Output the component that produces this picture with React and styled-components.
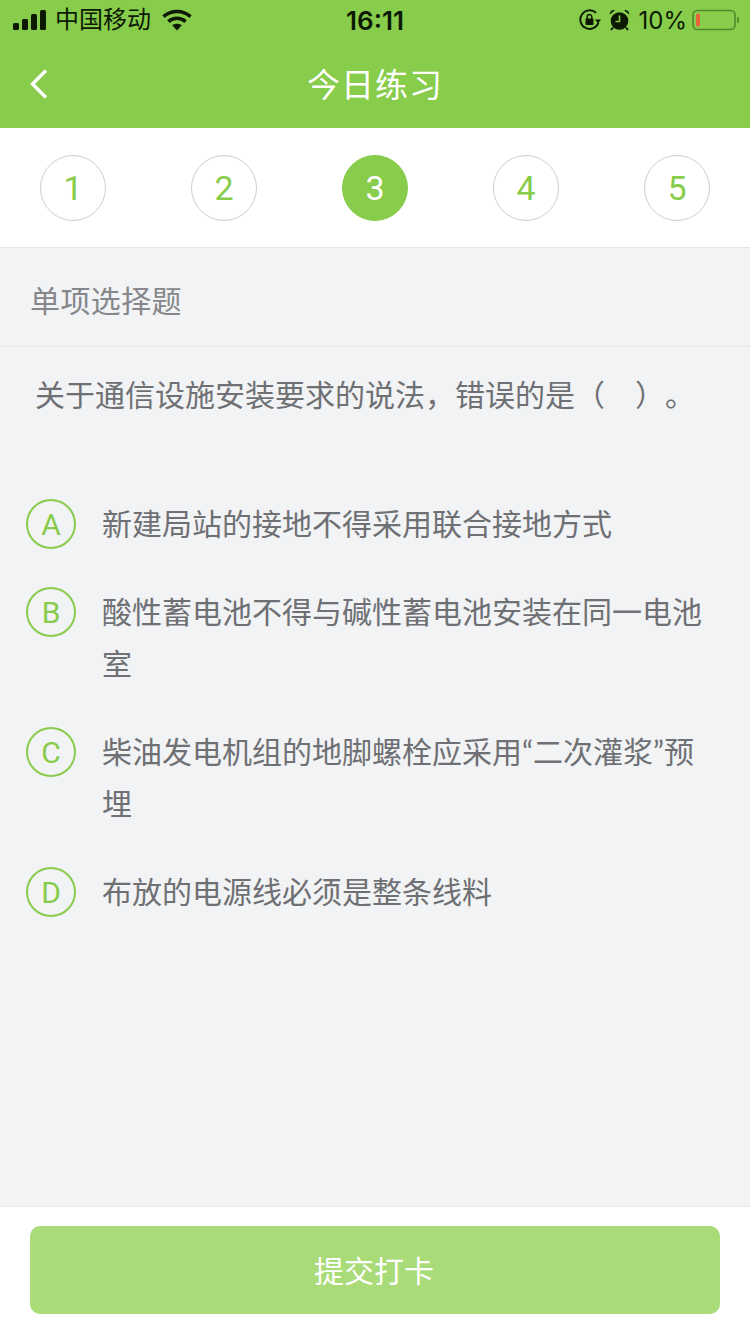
import React from 'react';
import styled, { createGlobalStyle } from 'styled-components';

const GlobalStyle = createGlobalStyle`
  html, body { margin: 0; padding: 0; }
  body {
    background: #f2f3f5;
    font-family: "Liberation Sans", "Noto Sans CJK SC", sans-serif;
  }
`;

const Page = styled.div`
  width: 750px;
  height: 1334px;
  display: flex;
  flex-direction: column;
  overflow: hidden;
`;

const Header = styled.header`
  background: #88cc4b;
`;

const StatusBar = styled.div`
  height: 40px;
  display: grid;
  grid-template-columns: 1fr auto 1fr;
  align-items: center;
  color: #0c1a04;
`;

const StatusLeft = styled.div`
  display: flex;
  align-items: center;
  padding-left: 13px;
`;

const Carrier = styled.span`
  font-size: 24px;
  margin-left: 9px;
  margin-right: 11px;
  line-height: 40px;
`;

const Time = styled.span`
  font-family: "Inter", "Liberation Sans", sans-serif;
  font-size: 26px;
  font-weight: 600;
`;

const StatusRight = styled.div`
  display: flex;
  align-items: center;
  justify-content: flex-end;
  gap: 8px;
  padding-right: 10px;
`;

const Percent = styled.span`
  font-family: "Inter", "Liberation Sans", sans-serif;
  font-size: 24px;
  margin: 0 -3px 0 1px;
`;

const NavBar = styled.div`
  height: 88px;
  box-sizing: border-box;
  display: grid;
  grid-template-columns: 1fr auto 1fr;
  align-items: center;
  padding: 0 30px;
`;

const Title = styled.h1`
  margin: 0 0 3px;
  font-size: 33px;
  font-weight: 400;
  letter-spacing: 1px;
  color: #fff;
`;

const Steps = styled.nav`
  height: 120px;
  box-sizing: border-box;
  background: #fff;
  border-bottom: 1px solid #e4e5e7;
  padding: 27px 40px 0;
  display: flex;
  justify-content: space-between;
  align-items: flex-start;
`;

const Step = styled.div`
  width: 66px;
  height: 66px;
  box-sizing: border-box;
  border-radius: 50%;
  display: flex;
  align-items: center;
  justify-content: center;
  font-family: "Roboto", "Liberation Sans", sans-serif;
  font-size: 34px;
  font-weight: 400;
  border: 1px solid ${p => (p.$active ? '#88cc4b' : '#cfcfcf')};
  background: ${p => (p.$active ? '#88cc4b' : '#fff')};
  color: ${p => (p.$active ? '#fff' : '#88cc4b')};
`;

const Body = styled.main`
  flex: 1;
  background: #f2f3f5;
`;

const SectionLabel = styled.div`
  height: 99px;
  box-sizing: border-box;
  padding: 4px 0 0 30px;
  display: flex;
  align-items: center;
  font-size: 30px;
  letter-spacing: 0.4px;
  color: #85878a;
  border-bottom: 1px solid #e6e7e9;
`;

const Question = styled.p`
  margin: 0;
  padding: 23px 0 0 35px;
  height: 150px;
  box-sizing: border-box;
  font-size: 30px;
  line-height: 52px;
  color: #6e7073;
  white-space: nowrap;
  text-spacing-trim: space-all;
`;

const Options = styled.ul`
  list-style: none;
  margin: 0;
  padding: 0 30px 0 26px;
  display: flex;
  flex-direction: column;
  gap: 36px;
`;

const Option = styled.li`
  display: flex;
  align-items: flex-start;
  gap: 26px;
`;

const Letter = styled.span`
  flex: none;
  width: 50px;
  height: 50px;
  margin-top: 2px;
  box-sizing: border-box;
  border: 2px solid #88cc4b;
  border-radius: 50%;
  display: flex;
  align-items: center;
  justify-content: center;
  font-family: "Roboto", "Liberation Sans", sans-serif;
  font-size: 30px;
  font-weight: 400;
  color: #88cc4b;
`;

const OptionText = styled.span`
  font-family: "Lato", "Noto Sans CJK SC", sans-serif;
  font-size: 30px;
  line-height: 52px;
  color: #6e7073;
`;

const Footer = styled.footer`
  height: 128px;
  box-sizing: border-box;
  background: #fff;
  border-top: 1px solid #e8e9eb;
  padding: 19px 30px 0;
`;

const Submit = styled.button`
  display: block;
  width: 100%;
  height: 88px;
  border: 0;
  border-radius: 10px;
  background: #a9dc79;
  color: #fff;
  font-family: inherit;
  font-size: 30px;
  padding: 0 2px 3px 0;
`;

const SignalIcon = () => (
  <svg width="33" height="20" viewBox="0 0 33 20" fill="currentColor">
    <rect x="0" y="13" width="6" height="7" rx="1.5" />
    <rect x="9" y="9" width="6" height="11" rx="1.5" />
    <rect x="18" y="4" width="6" height="16" rx="1.5" />
    <rect x="27" y="0" width="6" height="20" rx="1.5" />
  </svg>
);

const WifiIcon = () => (
  <svg width="30" height="22" viewBox="0 0 30 22" fill="none" stroke="currentColor" strokeWidth="3.6">
    <path d="M1.5 7.6C9 .8 21 .8 28.5 7.6" />
    <path d="M6.4 12.6c5-4.4 12.2-4.4 17.2 0" />
    <path d="M15 21.5l-4.8-5.2c2.8-2 6.8-2 9.6 0z" fill="currentColor" stroke="none" />
  </svg>
);

const LockRotationIcon = () => (
  <svg width="22" height="22" viewBox="0 0 22 22" fill="none" stroke="currentColor">
    <path d="M19.5 13.5A9.3 9.3 0 1 1 17 3.8" strokeWidth="1.9" />
    <path d="M16 10.5h6l-3 3.8z" fill="currentColor" stroke="none" />
    <rect x="6.5" y="9.5" width="8" height="6.5" rx="1" fill="currentColor" stroke="none" />
    <path d="M8.2 10V7.8a2.3 2.3 0 0 1 4.6 0V10" strokeWidth="1.5" />
  </svg>
);

const AlarmIcon = () => (
  <svg width="21" height="22" viewBox="0 0 21 22">
    <circle cx="10.5" cy="12" r="8.8" fill="#0c1a04" />
    <path d="M.8 5.5A4 4 0 0 1 6 1.2zM20.2 5.5A4 4 0 0 0 15 1.2z" fill="#0c1a04" />
    <path d="M4 18.5l-2 2.5M17 18.5l2 2.5" stroke="#0c1a04" strokeWidth="2" />
    <path d="M10.5 6.5V12.5H6.5" fill="none" stroke="#88cc4b" strokeWidth="1.6" />
  </svg>
);

const BatteryIcon = () => (
  <svg width="48" height="22" viewBox="0 0 48 22">
    <rect x="1" y="1.5" width="42" height="19" rx="4.5" fill="none" stroke="#4f8a2c" strokeWidth="1.6" />
    <rect x="4" y="4.5" width="4" height="13" rx="1.5" fill="#e8663c" />
    <rect x="45" y="8" width="1.8" height="6" rx="0.9" fill="#4f8a2c" />
  </svg>
);

const BackIcon = () => (
  <svg width="18" height="30" viewBox="0 0 18 30" fill="none" stroke="#fff" strokeWidth="3.4">
    <path d="M16 1.5L2.5 15 16 28.5" />
  </svg>
);

const steps = [1, 2, 3, 4, 5];

const options = [
  { key: 'A', text: '新建局站的接地不得采用联合接地方式' },
  { key: 'B', text: '酸性蓄电池不得与碱性蓄电池安装在同一电池室' },
  { key: 'C', text: '柴油发电机组的地脚螺栓应采用“二次灌浆”预埋' },
  { key: 'D', text: '布放的电源线必须是整条线料' },
];

export default function App() {
  return (
    <Page>
      <GlobalStyle />
      <Header>
        <StatusBar>
          <StatusLeft>
            <SignalIcon />
            <Carrier>中国移动</Carrier>
            <WifiIcon />
          </StatusLeft>
          <Time>16:11</Time>
          <StatusRight>
            <LockRotationIcon />
            <AlarmIcon />
            <Percent>10%</Percent>
            <BatteryIcon />
          </StatusRight>
        </StatusBar>
        <NavBar>
          <BackIcon />
          <Title>今日练习</Title>
        </NavBar>
      </Header>
      <Steps>
        {steps.map(n => (
          <Step key={n} $active={n === 3}>{n}</Step>
        ))}
      </Steps>
      <Body>
        <SectionLabel>单项选择题</SectionLabel>
        <Question>{'关于通信设施安装要求的说法\uFF0C错误的是\uFF08\u3000\uFF09\u3002'}</Question>
        <Options>
          {options.map(o => (
            <Option key={o.key}>
              <Letter>{o.key}</Letter>
              <OptionText>{o.text}</OptionText>
            </Option>
          ))}
        </Options>
      </Body>
      <Footer>
        <Submit>提交打卡</Submit>
      </Footer>
    </Page>
  );
}
